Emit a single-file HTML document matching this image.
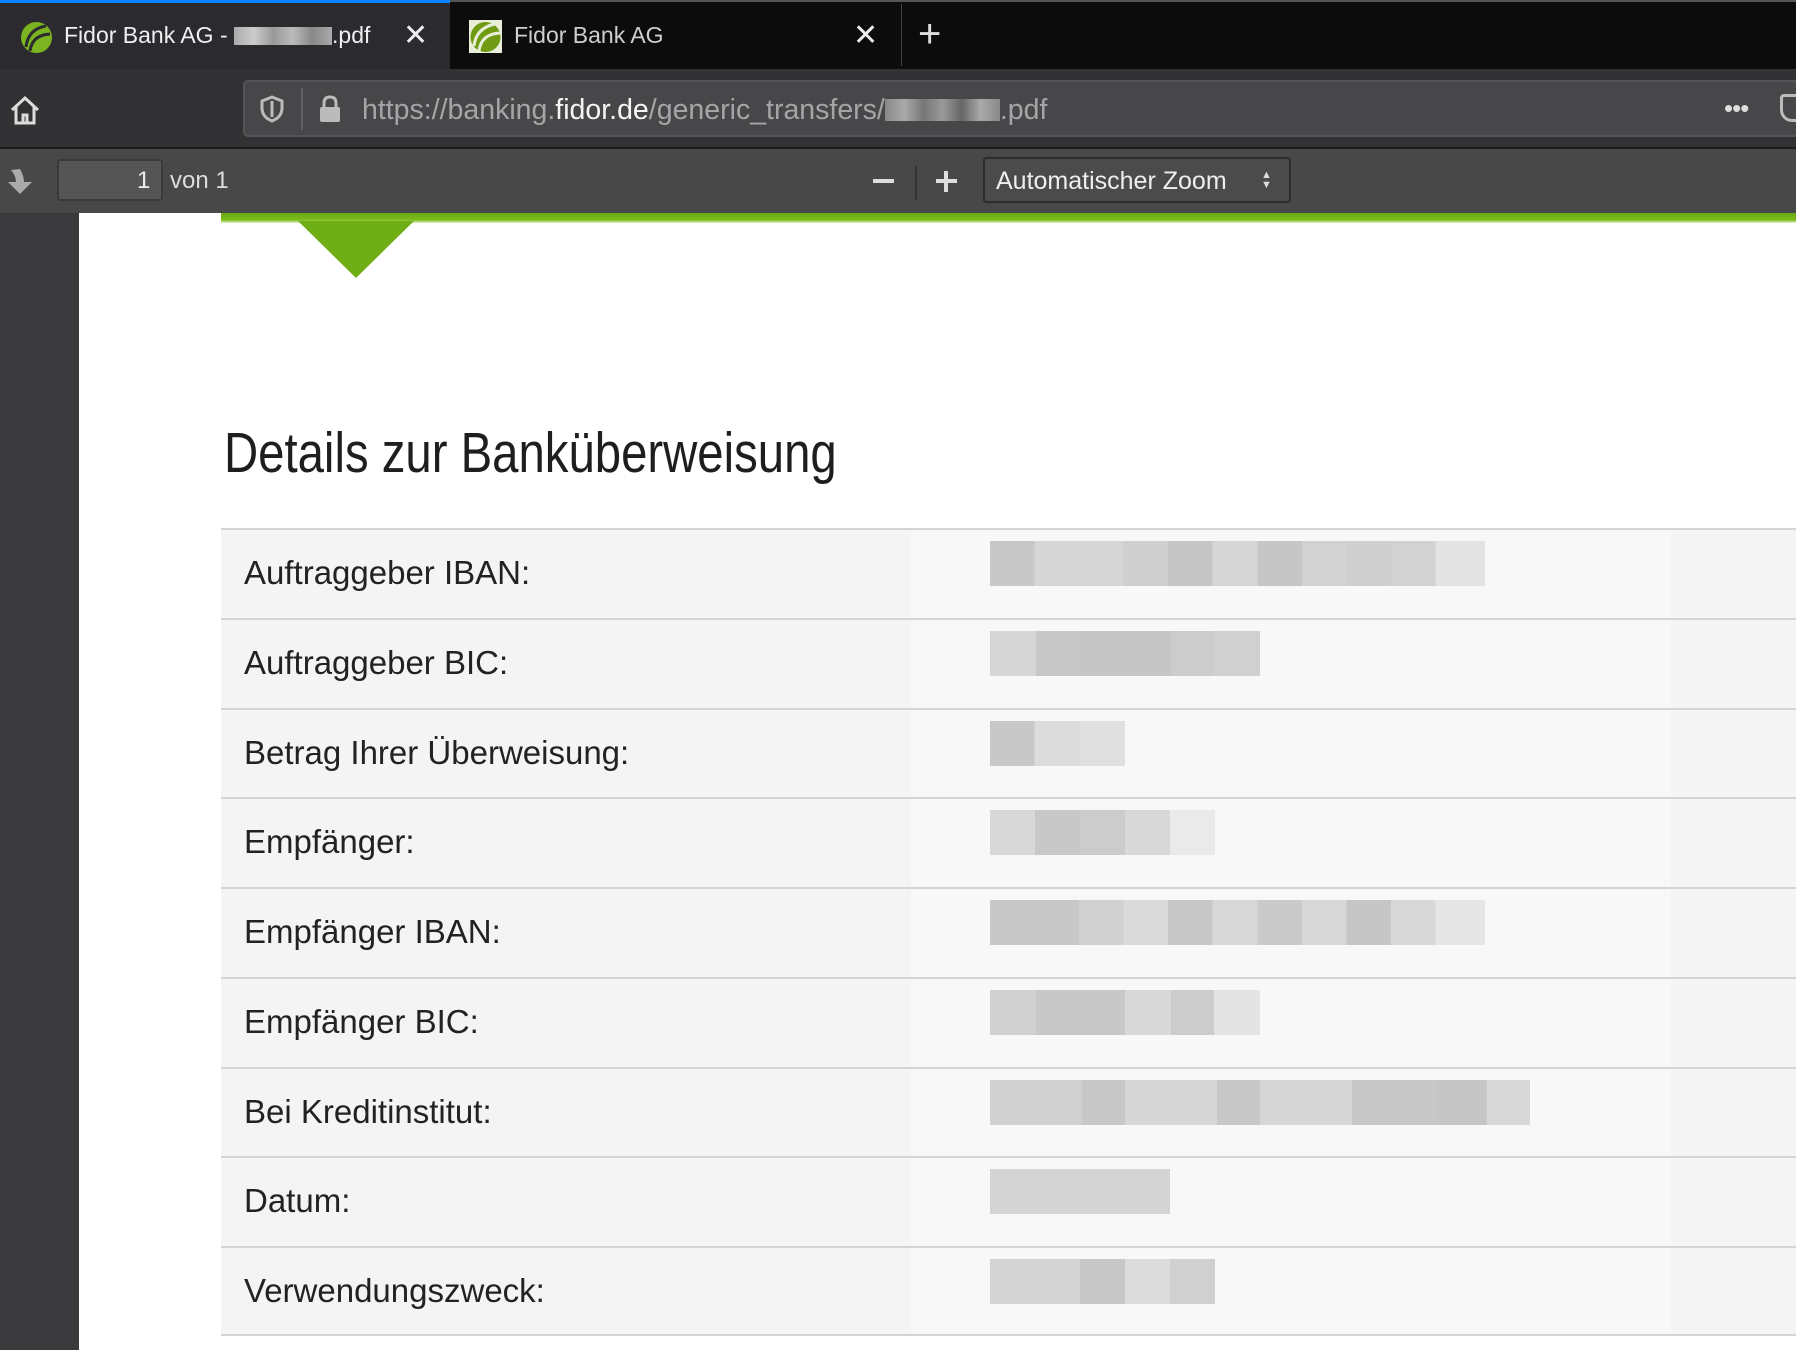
<!DOCTYPE html>
<html><head><meta charset="utf-8"><style>
*{margin:0;padding:0;box-sizing:border-box}
body{width:1796px;height:1350px;overflow:hidden;background:#3a3a3c;font-family:"Liberation Sans",sans-serif;position:relative}
.abs{position:absolute}
.tabbar{left:0;top:0;width:1796px;height:69px;background:#0c0c0d;border-top:2px solid #555}
.tab1{left:0;top:0;width:450px;height:69px;background:#2b2a2f;border-top:3px solid #0a84ff}
.tabtxt{font-size:23px;color:#f0f0f0;top:22px}
.toolbar{left:0;top:69px;width:1796px;height:80px;background:#323234;border-bottom:2px solid #1c1c1e}
.url{left:243px;top:80px;width:1580px;height:57px;background:#474749;border:2px solid #555557;border-radius:5px}
.pdfbar{left:0;top:149px;width:1796px;height:64px;background:#484848}
.content{left:79px;top:213px;width:1717px;height:1137px;background:#fff}
.row{position:absolute;left:221px;width:1575px;height:90px;background:#f4f4f4;border-top:2px solid #d4d4d4}
.row .mid{position:absolute;left:690px;top:0;width:760px;height:88px;background:#f8f8f8}
.row .lbl{position:absolute;left:23px;top:24px;font-size:33px;color:#222}
.blk{position:absolute;top:11px;height:45px}
</style></head><body>
<div class="abs tabbar"></div>
<div class="abs tab1"></div>
<svg class="abs" style="left:20px;top:21px" width="33" height="33" viewBox="0 0 33 33"><circle cx="16.5" cy="16.5" r="15.5" fill="#7cb320"/><path d="M6 26 Q8 8 26 5" stroke="#2b2a2f" stroke-width="3" fill="none"/><path d="M10 30 Q12 14 30 13" stroke="#2b2a2f" stroke-width="3" fill="none"/></svg>
<div class="abs tabtxt" style="left:64px">Fidor Bank AG - <span style="display:inline-block;width:98px;height:18px;background:linear-gradient(90deg,#aaa,#ccc,#999,#bbb,#888,#aaa);vertical-align:-2px"></span>.pdf</div>
<div class="abs" style="left:403px;top:18px;font-size:30px;color:#eee">✕</div>
<svg class="abs" style="left:469px;top:20px" width="33" height="33" viewBox="0 0 33 33"><rect width="33" height="33" fill="#e8eed8"/><circle cx="16.5" cy="17" r="15" fill="#6f9a12"/><path d="M5 26 Q7 8 26 4" stroke="#e8eed8" stroke-width="3" fill="none"/><path d="M10 31 Q12 14 31 13" stroke="#e8eed8" stroke-width="3" fill="none"/></svg>
<div class="abs tabtxt" style="left:514px;color:#cfcfcf">Fidor Bank AG</div>
<div class="abs" style="left:853px;top:18px;font-size:30px;color:#eee">✕</div>
<div class="abs" style="left:901px;top:4px;width:1px;height:62px;background:#444"></div>
<div class="abs" style="left:918px;top:12px;font-size:40px;color:#ddd;font-weight:300">+</div>
<div class="abs toolbar"></div>
<svg class="abs" style="left:8px;top:93px" width="34" height="34" viewBox="0 0 34 34"><path d="M4 17 L17 5 L30 17 M8 14 V30 H26 V14 M15 30 V22 H19 V30" stroke="#ddd" stroke-width="3" fill="none"/></svg>
<div class="abs url"></div>
<svg class="abs" style="left:259px;top:95px" width="26" height="28" viewBox="0 0 26 28"><path d="M13 2 L23 6 V13 Q23 22 13 26 Q3 22 3 13 V6 Z" stroke="#bbb" stroke-width="3" fill="none"/><path d="M13 6 V22" stroke="#bbb" stroke-width="3"/></svg>
<div class="abs" style="left:301px;top:88px;width:2px;height:42px;background:#5e5e60"></div>
<svg class="abs" style="left:317px;top:94px" width="26" height="30" viewBox="0 0 26 30"><path d="M7 13 V9 Q7 3 13 3 Q19 3 19 9 V13" stroke="#bbb" stroke-width="3" fill="none"/><rect x="3" y="13" width="20" height="15" rx="2" fill="#bbb"/></svg>
<div class="abs" style="left:362px;top:94px;font-size:28.5px;color:#a5a5a7;white-space:nowrap">https://banking.<span style="color:#f5f5f5">fidor.de</span>/generic_transfers/<span style="display:inline-block;width:115px;height:22px;background:linear-gradient(90deg,#888,#aaa,#777,#999,#666,#aaa,#888);vertical-align:-2px"></span>.pdf</div>
<div class="abs" style="left:1724px;top:93px;font-size:26px;color:#ddd;letter-spacing:-1px">•••</div>
<div class="abs" style="left:1780px;top:94px;width:30px;height:28px;border:3px solid #bbb;border-radius:4px 4px 12px 12px"></div>
<div class="abs pdfbar"></div>
<svg class="abs" style="left:5px;top:166px" width="30" height="30" viewBox="0 0 30 30"><path d="M15 3 Q19 10 19 16 H27 L15 28 L3 16 H11 Q11 10 6 4 Z" fill="#aaa"/></svg>
<div class="abs" style="left:57px;top:159px;width:106px;height:42px;background:#555;border:2px solid #3a3a3a;border-radius:3px"></div>
<div class="abs" style="left:137px;top:167px;font-size:24px;color:#eee">1</div>
<div class="abs" style="left:170px;top:167px;font-size:24px;color:#ddd">von 1</div>
<div class="abs" style="left:873px;top:179px;width:21px;height:4px;background:#ddd"></div>
<div class="abs" style="left:915px;top:166px;width:2px;height:34px;background:#333"></div>
<div class="abs" style="left:936px;top:179px;width:21px;height:4px;background:#ddd"></div>
<div class="abs" style="left:944px;top:171px;width:4px;height:21px;background:#ddd"></div>
<div class="abs" style="left:983px;top:157px;width:308px;height:46px;background:#4b4b4b;border:2px solid #2c2c2c;border-radius:3px"></div>
<div class="abs" style="left:996px;top:167px;font-size:25px;color:#eee">Automatischer Zoom</div>
<div class="abs" style="left:1261px;top:170px;font-size:11px;color:#ddd;line-height:10px">▲<br>▼</div>
<div class="abs content"></div>
<div class="abs" style="left:221px;top:213px;width:1575px;height:10px;background:linear-gradient(#6aa815,#7dbd1c 70%,#e8f3d5)"></div>
<svg class="abs" style="left:298px;top:221px" width="116" height="58"><polygon points="0,0 116,0 58,57" fill="#6fae14"/></svg>
<div class="abs" style="left:224px;top:420px;font-size:57px;color:#1e1e1e;transform:scaleX(0.83);transform-origin:left;white-space:nowrap">Details zur Banküberweisung</div>

<div class="row" style="top:528px"><div class="mid"></div><div class="lbl">Auftraggeber IBAN:</div>
<div class="blk" style="left:769px;width:495px;background:linear-gradient(90deg,#c8c8c8 0 9%,#d6d6d6 9% 27%,#cfcfcf 27% 36%,#c6c6c6 36% 45%,#d6d6d6 45% 54%,#c6c6c6 54% 63%,#d2d2d2 63% 72%,#cfcfcf 72% 81%,#d2d2d2 81% 90%,#e4e4e4 90%)"></div></div>
<div class="row" style="top:618px"><div class="mid"></div><div class="lbl">Auftraggeber BIC:</div>
<div class="blk" style="left:769px;width:270px;background:linear-gradient(90deg,#d6d6d6 0 17%,#c8c8c8 17% 33%,#c6c6c6 33% 67%,#cccccc 67% 83%,#d0d0d0 83%)"></div></div>
<div class="row" style="top:708px"><div class="mid"></div><div class="lbl">Betrag Ihrer Überweisung:</div>
<div class="blk" style="left:769px;width:135px;background:linear-gradient(90deg,#c8c8c8 0 33%,#dcdcdc 33% 67%,#e0e0e0 67%)"></div></div>
<div class="row" style="top:797px"><div class="mid"></div><div class="lbl">Empfänger:</div>
<div class="blk" style="left:769px;width:225px;background:linear-gradient(90deg,#d8d8d8 0 20%,#c8c8c8 20% 40%,#cccccc 40% 60%,#d8d8d8 60% 80%,#eaeaea 80%)"></div></div>
<div class="row" style="top:887px"><div class="mid"></div><div class="lbl">Empfänger IBAN:</div>
<div class="blk" style="left:769px;width:495px;background:linear-gradient(90deg,#c8c8c8 0 18%,#d0d0d0 18% 27%,#dadada 27% 36%,#c8c8c8 36% 45%,#d8d8d8 45% 54%,#cacaca 54% 63%,#d8d8d8 63% 72%,#c6c6c6 72% 81%,#d8d8d8 81% 90%,#e6e6e6 90%)"></div></div>
<div class="row" style="top:977px"><div class="mid"></div><div class="lbl">Empfänger BIC:</div>
<div class="blk" style="left:769px;width:270px;background:linear-gradient(90deg,#d0d0d0 0 17%,#c8c8c8 17% 50%,#d8d8d8 50% 67%,#cccccc 67% 83%,#e4e4e4 83%)"></div></div>
<div class="row" style="top:1067px"><div class="mid"></div><div class="lbl">Bei Kreditinstitut:</div>
<div class="blk" style="left:769px;width:540px;background:linear-gradient(90deg,#d0d0d0 0 17%,#c8c8c8 17% 25%,#d6d6d6 25% 42%,#c8c8c8 42% 50%,#d6d6d6 50% 67%,#c8c8c8 67% 83%,#c6c6c6 83% 92%,#d8d8d8 92%)"></div></div>
<div class="row" style="top:1156px"><div class="mid"></div><div class="lbl">Datum:</div>
<div class="blk" style="left:769px;width:180px;background:#d4d4d4"></div></div>
<div class="row" style="top:1246px"><div class="mid"></div><div class="lbl">Verwendungszweck:</div>
<div class="blk" style="left:769px;width:225px;background:linear-gradient(90deg,#d4d4d4 0 40%,#c8c8c8 40% 60%,#dcdcdc 60% 80%,#d0d0d0 80%)"></div></div>
<div class="abs" style="left:221px;top:1334px;width:1575px;height:2px;background:#d4d4d4"></div>
<div class="abs" style="left:221px;top:1336px;width:1575px;height:14px;background:#fff"></div>
</body></html>
